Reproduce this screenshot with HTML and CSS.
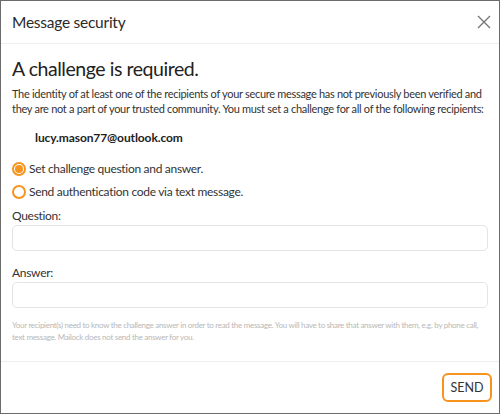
FILE: index.html
```html
<!DOCTYPE html>
<html>
<head>
<meta charset="utf-8">
<link rel="stylesheet" href="styles.css">
</head>
<body>
<div class="dialog">
  <div class="header">
    <div class="title">Message security</div>
    <svg class="close" width="14" height="14" viewBox="0 0 14 14"><path d="M1 1L13 13M13 1L1 13" stroke="#777" stroke-width="1.4" fill="none"/></svg>
  </div>
  <div class="body">
    <h1 class="heading">A challenge is required.</h1>
    <p class="intro">The identity of at least one of the recipients of your secure message has not previously been verified and they are not a part of your trusted community. You must set a challenge for all of the following recipients:</p>
    <div class="email">lucy.mason77@outlook.com</div>
    <div class="options">
      <label class="option"><span class="radio checked"></span>Set challenge question and answer.</label>
      <label class="option"><span class="radio"></span>Send authentication code via text message.</label>
    </div>
    <div class="field">
      <div class="label">Question:</div>
      <div class="input"></div>
    </div>
    <div class="field">
      <div class="label">Answer:</div>
      <div class="input"></div>
    </div>
    <p class="help">Your recipient(s) need to know the challenge answer in order to read the message. You will have to share that answer with them, e.g. by phone call, text message. Mailock does not send the answer for you.</p>
  </div>
  <div class="footer">
    <button class="send">SEND</button>
  </div>
</div>
</body>
</html>
```
FILE: styles.css
```css
html, body { margin: 0; padding: 0; }
body { font-family: "Lato", "Noto Sans", sans-serif; color: #222; background: #fff; }
.dialog { width: 500px; height: 414px; box-sizing: border-box; border: 1px solid #6b6b6b; display: flex; flex-direction: column; overflow: hidden; }
.header { flex-shrink: 0; height: 43px; box-sizing: border-box; border-bottom: 1px solid #eee; display: flex; align-items: center; justify-content: space-between; padding: 0 8px 0 11px; }
.title { font-size: 15.5px; letter-spacing: -0.25px; color: #2a2a2a; }
.close { display: block; }
.body { padding: 0 11px; flex: 1; }
.heading { font-size: 19.5px; letter-spacing: -0.45px; font-weight: 400; margin: 13px 0 5px; color: #222; line-height: 24px; }
.intro { font-size: 11px; letter-spacing: -0.3px; line-height: 15px; margin: 0; color: #333; }
.email { font-size: 12px; letter-spacing: -0.1px; font-weight: 700; margin: 14px 0 0 23px; line-height: 16px; color: #222; }
.options { margin-top: 15px; display: flex; flex-direction: column; gap: 7px; }
.option { display: flex; align-items: center; font-size: 12px; letter-spacing: -0.3px; color: #333; line-height: 16px; }
.radio { width: 10px; height: 10px; border: 2px solid #f7941d; border-radius: 50%; margin-right: 3px; box-sizing: content-box; position: relative; flex-shrink: 0; }
.radio.checked::after { content: ""; position: absolute; left: 1px; top: 1px; width: 8px; height: 8px; border-radius: 50%; background: #f7941d; }
.field { margin-top: 9px; }
.field + .field { margin-top: 15px; }
.label { font-size: 12px; letter-spacing: -0.3px; color: #333; line-height: 14px; margin-bottom: 2px; }
.input { height: 24px; border: 1px solid #e4e4e4; border-radius: 5px; }
.help { font-size: 8px; letter-spacing: -0.3px; color: #b8b8b8; line-height: 12px; margin: 11px 0 0; }
.footer { flex-shrink: 0; height: 52px; box-sizing: border-box; border-top: 1px solid #eee; display: flex; align-items: center; justify-content: flex-end; padding: 0 7px 0 0; }
.send { font-family: "Lato", "Noto Sans", sans-serif; font-size: 12.5px; color: #333; background: #fff; border: 2px solid #f7941d; border-radius: 6px; width: 50px; height: 29px; padding: 0; }
```
